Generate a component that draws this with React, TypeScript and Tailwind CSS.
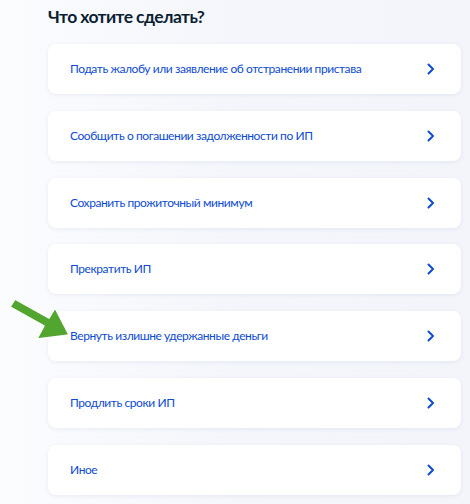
const items = [
  "Подать жалобу или заявление об отстранении пристава",
  "Сообщить о погашении задолженности по ИП",
  "Сохранить прожиточный минимум",
  "Прекратить ИП",
  "Вернуть излишне удержанные деньги",
  "Продлить сроки ИП",
  "Иное",
];

const Chevron = () => (
  <svg width="8" height="12" viewBox="0 0 8 12" fill="none">
    <path d="M1.5 1.5 6 6l-4.5 4.5" stroke="#0d4cd3" strokeWidth="2" strokeLinecap="round" strokeLinejoin="round" />
  </svg>
);

const GreenArrow = () => (
  <svg className="absolute left-[6px] top-[294px]" width="70" height="52" viewBox="0 0 70 52">
    <path
      d="M9 5 L4 13 L38 32 L31 45 L63 41 L49 14 L43 24 Z"
      fill="#52a52e"
      stroke="#ffffff"
      strokeWidth="1.5"
      strokeLinejoin="round"
    />
  </svg>
);

export default function App() {
  return (
    <div className="relative w-[470px] h-[504px] overflow-hidden bg-gradient-to-r from-[#fbfcfe] via-[#f4f6fb] to-[#f3f5fa] font-['Lato','Noto_Sans',sans-serif]">
      <div className="pl-[48px] pr-[9px] pt-[5px]">
        <h2 className="text-[17.5px] leading-[24px] font-bold text-[#0b1f33] tracking-[-0.6px]">Что хотите сделать?</h2>
        <div className="mt-[15px] flex flex-col gap-[16.8px]">
          {items.map((t) => (
            <div
              key={t}
              className="h-[50px] rounded-[8px] bg-white shadow-[0_1px_4px_rgba(18,51,110,0.08)] flex items-center justify-between pl-[22px] pr-[26px]"
            >
              <span className="text-[12px] tracking-[-0.42px] text-[#0d4cd3]">{t}</span>
              <Chevron />
            </div>
          ))}
        </div>
      </div>
      <GreenArrow />
    </div>
  );
}
